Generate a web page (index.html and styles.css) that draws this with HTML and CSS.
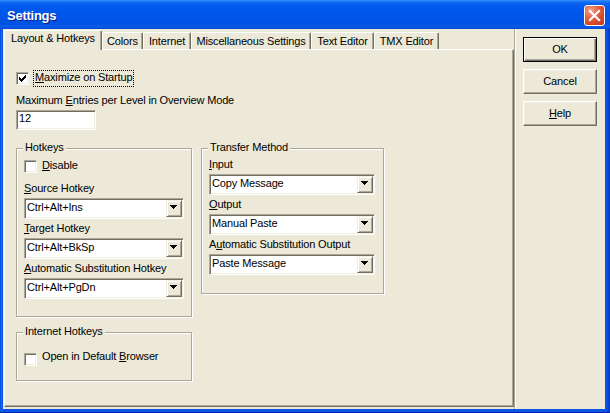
FILE: index.html
```html
<!DOCTYPE html>
<html>
<head>
<meta charset="utf-8">
<title>Settings</title>
<link rel="stylesheet" href="styles.css">
</head>
<body>
<div class="window">
  <div class="titlebar">
    <span class="title">Settings</span>
    <span class="close">
      <svg width="19" height="19" viewBox="0 0 19 19"><path d="M5 5L14 14M14 5L5 14" stroke="#fff" stroke-width="2.2" stroke-linecap="square"/></svg>
    </span>
  </div>
  <div class="client">
    <div class="tabctl">
      <div class="tabstrip">
        <div class="tab sel t1">Layout &amp; Hotkeys</div>
        <div class="tab t2">Colors</div>
        <div class="tab t3">Internet</div>
        <div class="tab t4">Miscellaneous Settings</div>
        <div class="tab t5">Text Editor</div>
        <div class="tab t6">TMX Editor</div>
      </div>
      <div class="panel">
        <div class="chk startup">
          <span class="cb"><svg width="9" height="9" viewBox="0 0 9 9"><path d="M1 3h1v1h1v1h1v-1h1v-1h1v-1h1v-1h1v3h-1v1h-1v1h-1v1h-1v1h-1v-1h-1v-1h-1z" fill="#000"/></svg></span>
          <span class="focus"><u>M</u>aximize on Startup</span>
        </div>
        <div class="lbl entries">Maximum <u>E</u>ntries per Level in Overview Mode</div>
        <div class="edit">12</div>
        <div class="groups">
          <div class="col-left">
            <div class="group hotkeys">
              <span class="legend">Hotkeys</span>
              <div class="chk disable">
                <span class="cb"></span>
                <span><u>D</u>isable</span>
              </div>
              <div class="lbl first"><u>S</u>ource Hotkey</div>
              <div class="combo"><span class="val">Ctrl+Alt+Ins</span><span class="dd"><svg width="7" height="4" viewBox="0 0 7 4"><path d="M0 0h7v1h-1v1h-1v1h-1v1h-1v-1h-1v-1h-1v-1h-1z" fill="#000"/></svg></span></div>
              <div class="lbl"><u>T</u>arget Hotkey</div>
              <div class="combo"><span class="val">Ctrl+Alt+BkSp</span><span class="dd"><svg width="7" height="4" viewBox="0 0 7 4"><path d="M0 0h7v1h-1v1h-1v1h-1v1h-1v-1h-1v-1h-1v-1h-1z" fill="#000"/></svg></span></div>
              <div class="lbl"><u>A</u>utomatic Substitution Hotkey</div>
              <div class="combo"><span class="val">Ctrl+Alt+PgDn</span><span class="dd"><svg width="7" height="4" viewBox="0 0 7 4"><path d="M0 0h7v1h-1v1h-1v1h-1v1h-1v-1h-1v-1h-1v-1h-1z" fill="#000"/></svg></span></div>
            </div>
            <div class="group inet">
              <span class="legend">Internet Hotkeys</span>
              <div class="chk browser">
                <span class="cb"></span>
                <span>Open in Default <u>B</u>rowser</span>
              </div>
            </div>
          </div>
          <div class="group transfer">
            <span class="legend">Transfer Method</span>
            <div class="lbl tfirst"><u>I</u>nput</div>
            <div class="combo wide"><span class="val">Copy Message</span><span class="dd"><svg width="7" height="4" viewBox="0 0 7 4"><path d="M0 0h7v1h-1v1h-1v1h-1v1h-1v-1h-1v-1h-1v-1h-1z" fill="#000"/></svg></span></div>
            <div class="lbl"><u>O</u>utput</div>
            <div class="combo wide"><span class="val">Manual Paste</span><span class="dd"><svg width="7" height="4" viewBox="0 0 7 4"><path d="M0 0h7v1h-1v1h-1v1h-1v1h-1v-1h-1v-1h-1v-1h-1z" fill="#000"/></svg></span></div>
            <div class="lbl">A<u>u</u>tomatic Substitution Output</div>
            <div class="combo wide"><span class="val">Paste Message</span><span class="dd"><svg width="7" height="4" viewBox="0 0 7 4"><path d="M0 0h7v1h-1v1h-1v1h-1v1h-1v-1h-1v-1h-1v-1h-1z" fill="#000"/></svg></span></div>
          </div>
        </div>
      </div>
    </div>
    <div class="sep"></div>
    <div class="buttons">
      <div class="btn default">OK</div>
      <div class="btn">Cancel</div>
      <div class="btn"><u>H</u>elp</div>
    </div>
  </div>
</div>
</body>
</html>
```
FILE: styles.css
```css
* { box-sizing: border-box; }
html, body { margin: 0; padding: 0; }
body {
  width: 610px;
  height: 413px;
  overflow: hidden;
  background: #0551E6;
  font-family: "Liberation Sans", Arial, sans-serif;
  font-size: 11px;
  line-height: 13px;
  letter-spacing: -0.15px;
  color: #000;
}
u { text-decoration: underline; }

.window {
  width: 610px;
  height: 413px;
  display: flex;
  flex-direction: column;
  background: linear-gradient(to right, #0843D6 0, #1467F2 1px, #0A55E8 3px, #0A55E8 605px, #0C4FE0 607px, #0038C8 610px);
  box-shadow: inset 0 -1px #0024A8;
}

.titlebar {
  height: 29px;
  flex: none;
  display: flex;
  align-items: flex-start;
  justify-content: space-between;
  padding: 5px 5px 0 7px;
  background: linear-gradient(to bottom, #3A8DF8 0px, #1470F2 2px, #0860EE 4px, #0058EE 8px, #0055E8 18px, #0052E2 24px, #0A5CE8 26px, #0650E0 28px, #0046D4 29px);
}
.title {
  margin-top: 3px;
  font: bold 13px/15px "Liberation Sans", Arial, sans-serif;
  letter-spacing: -0.25px;
  color: #fff;
  text-shadow: 1px 1px #0A1E8C;
}
.close {
  width: 21px;
  height: 21px;
  border: 1px solid #fff;
  border-radius: 3px;
  background: radial-gradient(circle at 30% 25%, #F2A58E 0%, #E5674A 35%, #D7482A 65%, #C23A1D 100%);
  display: flex;
}

.client {
  flex: 1;
  margin: 0 5px 4px 3px;
  background: #ECE9D8;
  display: flex;
}

.tabctl {
  width: 510px;
  margin: 1px 0 2px 1px;
  display: flex;
  flex-direction: column;
}
.tabstrip {
  height: 19px;
  flex: none;
  display: flex;
  align-items: flex-end;
}
.tab {
  height: 17px;
  border: 1px solid;
  border-color: #fff #716F64 transparent #fff;
  border-bottom: none;
  border-radius: 2px 2px 0 0;
  box-shadow: inset -1px 0 #ACA899;
  text-align: center;
  padding-top: 2px;
  white-space: nowrap;
  background: #ECE9D8;
}
.tab.sel {
  height: 20px;
  padding-top: 1px;
  margin-bottom: -1px;
  position: relative;
  z-index: 1;
}
.t1 { width: 98px; }
.t2 { width: 41px; }
.t3 { width: 48px; }
.t4 { width: 120px; }
.t5 { width: 63px; }
.t6 { width: 65px; }

.panel {
  flex: 1;
  border: 1px solid;
  border-color: #fff #716F64 #716F64 #fff;
  box-shadow: inset -1px -1px #ACA899;
  padding: 20px 0 0 11px;
}

/* sunken 3D frame */
.cb, .edit, .combo {
  background: #fff;
  border: 1px solid;
  border-color: #ACA899 #fff #fff #ACA899;
  box-shadow: inset 1px 1px #716F64, inset -1px -1px #F1EFE2;
}
.cb {
  width: 13px;
  height: 13px;
  flex: none;
  padding: 1px;
  display: flex;
}

.chk { display: flex; align-items: flex-start; }
.startup { height: 17px; }
.startup .cb { margin-top: 2px; margin-right: 4px; }
.focus {
  border: 1px dotted #000;
  padding: 0 1px 2px 1px;
  line-height: 13px;
}
.disable .cb { margin-top: 1px; margin-right: 5px; }
.browser .cb { margin-top: 3px; margin-right: 5px; }

.lbl { margin-top: 3px; white-space: nowrap; }
.lbl.entries { margin-top: 7px; }
.edit {
  width: 80px;
  height: 20px;
  margin-top: 3px;
  padding: 1px 0 0 2px;
}

.groups {
  display: flex;
  align-items: flex-start;
  gap: 9px;
  margin-top: 18px;
}
.col-left { display: flex; flex-direction: column; }
.group {
  position: relative;
  border: 1px solid #ACA899;
  box-shadow: inset 1px 1px #fff, 1px 1px #fff;
}
.legend {
  position: absolute;
  top: -8px;
  left: 6px;
  padding: 0 2px;
  background: #ECE9D8;
  white-space: nowrap;
}
.hotkeys { width: 176px; height: 169px; padding: 10px 0 0 7px; }
.inet { width: 176px; height: 49px; margin-top: 15px; padding: 17px 0 0 7px; }
.transfer { width: 183px; height: 146px; padding: 9px 0 0 7px; }

.hotkeys .lbl.first { margin-top: 9px; }
.transfer .lbl.tfirst { margin-top: 0; }

.combo {
  width: 160px;
  height: 21px;
  margin-top: 3px;
  padding: 1px;
  display: flex;
}
.combo.wide { width: 166px; }
.val {
  flex: 1;
  padding: 1px 0 0 1px;
  white-space: nowrap;
}
.dd {
  width: 16px;
  height: 17px;
  flex: none;
  background: #ECE9D8;
  border: 1px solid;
  border-color: #F1EFE2 #716F64 #716F64 #F1EFE2;
  box-shadow: inset 1px 1px #fff, inset -1px -1px #ACA899;
  padding: 4px 0 0 3px;
  display: flex;
  align-items: flex-start;
}
.dd svg { display: block; }

.sep {
  width: 2px;
  border-left: 1px solid #ACA899;
  border-right: 1px solid #fff;
}

.buttons {
  flex: 1;
  padding: 8px 0 0 7px;
  display: flex;
  flex-direction: column;
  gap: 7px;
}
.btn {
  width: 74px;
  height: 25px;
  display: flex;
  align-items: center;
  justify-content: center;
  background: #ECE9D8;
  border: 1px solid;
  border-color: #fff #716F64 #716F64 #fff;
  box-shadow: inset -1px -1px #ACA899, inset 1px 1px #F1EFE2;
}
.btn.default {
  border-color: #000;
  box-shadow: inset 1px 1px #fff, inset -1px -1px #716F64, inset -2px -2px #ACA899;
}
```
